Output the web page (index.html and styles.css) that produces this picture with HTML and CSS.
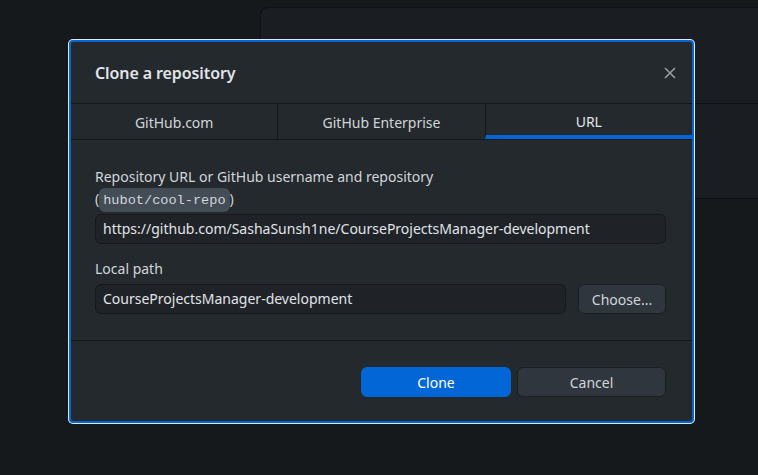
FILE: index.html
```html
<!DOCTYPE html>
<html>
<head>
<meta charset="utf-8">
<link rel="stylesheet" href="styles.css">
</head>
<body>
<div class="app">
  <div class="bg-panel">
    <div class="bg-row top"></div>
    <div class="bg-row"></div>
  </div>
</div>
<div class="dialog">
  <div class="dialog-header">
    <h1 class="title">Clone a repository</h1>
    <svg class="close" width="12" height="12" viewBox="0 0 12 12"><path d="M1 1L11 11M11 1L1 11" stroke="#959da5" stroke-width="1.6" fill="none"/></svg>
  </div>
  <div class="tabs">
    <div class="tab">GitHub.com</div>
    <div class="tab">GitHub Enterprise</div>
    <div class="tab active">URL</div>
  </div>
  <div class="dialog-body">
    <label class="label">Repository URL or GitHub username and repository<br>(<code class="chip">hubot/cool-repo</code>)</label>
    <div class="input wide">https://github.com/SashaSunsh1ne/CourseProjectsManager-development</div>
    <label class="label second">Local path</label>
    <div class="path-row">
      <div class="input grow">CourseProjectsManager-development</div>
      <button class="btn choose">Choose...</button>
    </div>
  </div>
  <div class="dialog-footer">
    <button class="btn primary">Clone</button>
    <button class="btn secondary">Cancel</button>
  </div>
</div>
</body>
</html>
```
FILE: styles.css
```css
html, body {
  margin: 0;
  padding: 0;
  background: #16191c;
  font-family: "Noto Sans", "Open Sans", sans-serif;
  width: 758px;
  height: 475px;
  overflow: hidden;
}

.app {
  padding: 7px 0 0 260px;
}

.bg-panel {
  background: #1a1d21;
  border-top: 1px solid #0f1113;
  border-left: 1px solid #0f1113;
  border-radius: 8px 0 0 0;
}

.bg-row {
  height: 94px;
  border-bottom: 1px solid #0f1113;
}

.bg-row.top {
  height: 95px;
}

.dialog {
  position: absolute;
  left: 69px;
  top: 40px;
  width: 621px;
  height: 379px;
  border: 2px solid #0366d6;
  border-radius: 4px;
  box-shadow: 0 0 0 1px #e6e9ed;
  background: #24292e;
  display: flex;
  flex-direction: column;
  color: #d1d5da;
}

.dialog-header {
  height: 61px;
  border-bottom: 1px solid #141619;
  display: flex;
  align-items: center;
  justify-content: space-between;
  padding: 0 16px 0 24px;
}

.title {
  margin: 0;
  font-size: 16px;
  font-weight: 600;
  color: #e1e4e8;
  letter-spacing: -0.1px;
}

.tabs {
  display: flex;
  height: 35px;
  border-bottom: 1px solid #141619;
}

.tab {
  flex: 1;
  display: flex;
  align-items: center;
  justify-content: center;
  font-size: 14px;
  color: #d1d5da;
  border-left: 1px solid #141619;
  box-sizing: border-box;
  padding-top: 2px;
}

.tab:first-child {
  border-left: none;
}

.tab.active {
  border-bottom: 4px solid #0366d6;
  padding-top: 4px;
  color: #e1e4e8;
}

.dialog-body {
  padding: 26px 26px 26px 24px;
  border-bottom: 1px solid #141619;
  display: flex;
  flex-direction: column;
}

.label {
  font-size: 14px;
  line-height: 22px;
  color: #d1d5da;
}

.label.second {
  margin-top: 14px;
}

.chip {
  font-family: "Liberation Mono", "DejaVu Sans Mono", monospace;
  font-size: 13.6px;
  line-height: 1;
  background: #444c56;
  border-radius: 6px;
  padding: 5px 4px 4px;
  color: #d1d5da;
}

.input {
  margin-top: 4px;
  height: 28px;
  line-height: 28px;
  background: #1f2327;
  border: 1px solid #16181b;
  border-radius: 6px;
  padding: 0 7px;
  font-size: 14px;
  color: #e1e4e8;
  white-space: nowrap;
  overflow: hidden;
}

.path-row {
  display: flex;
  align-items: flex-end;
  gap: 12px;
}

.input.grow {
  flex: 1;
}

.btn {
  font-family: "Noto Sans", "Open Sans", sans-serif;
  font-size: 14px;
  height: 30px;
  border-radius: 6px;
  cursor: pointer;
}

.choose {
  width: 88px;
  background: #2f363d;
  border: 1px solid #1b1f23;
  color: #d1d5da;
  padding: 0;
}

.dialog-footer {
  display: flex;
  justify-content: flex-end;
  gap: 6px;
  padding: 26px 26px 0 0;
}

.primary {
  width: 150px;
  background: #0366d6;
  border: 1px solid #0366d6;
  color: #ffffff;
}

.secondary {
  width: 149px;
  background: #2f363d;
  border: 1px solid #1b1f23;
  color: #d1d5da;
}
```
